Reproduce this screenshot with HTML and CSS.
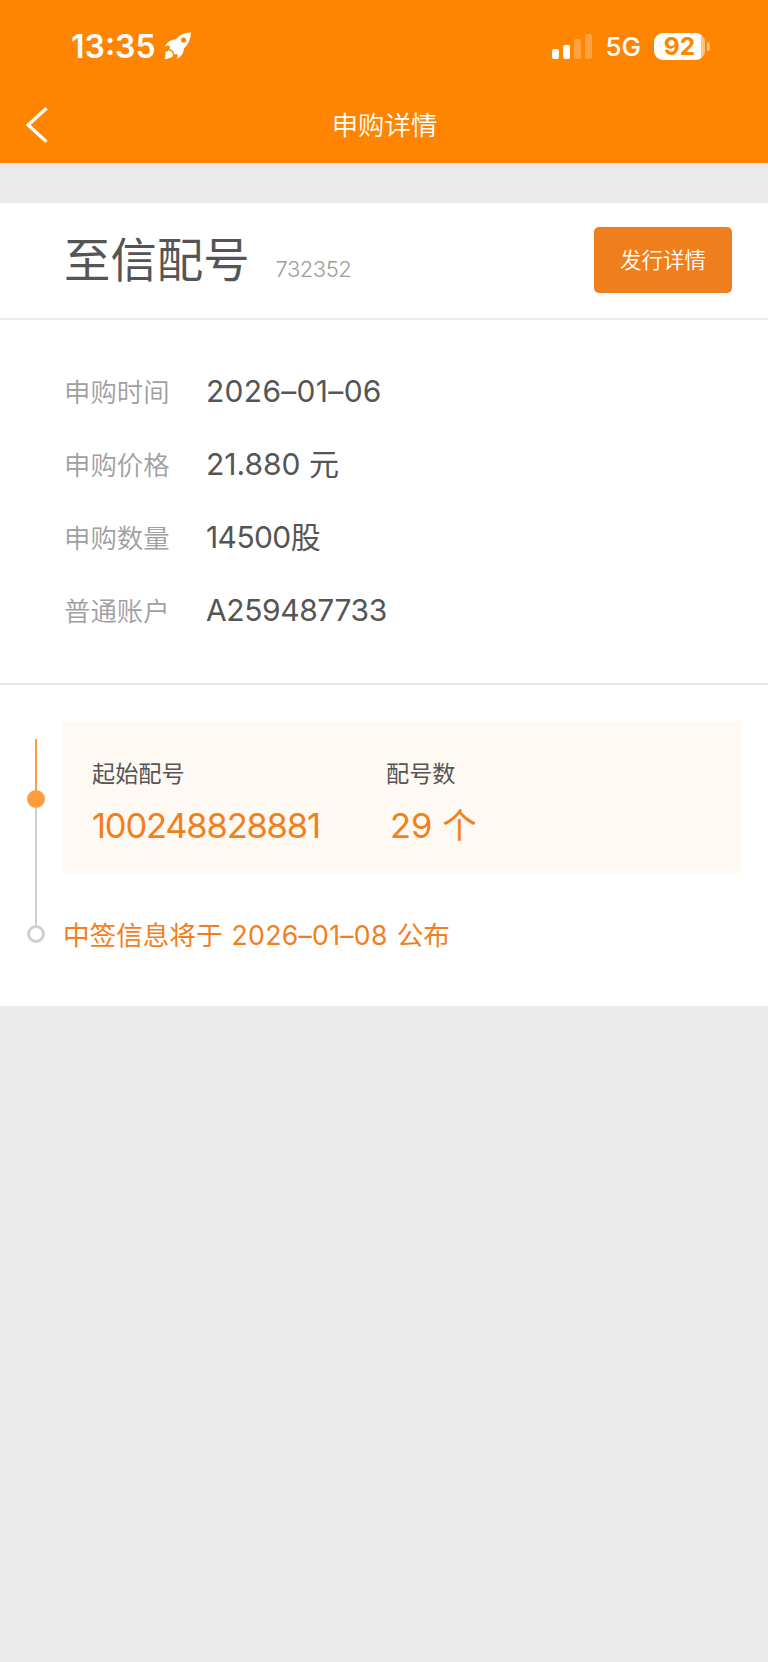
FILE: index.html
```
<!DOCTYPE html>
<html lang="zh-CN">
<head>
    <meta charset="UTF-8">
    <meta name="viewport" content="width=device-width, initial-scale=1.0">
    <title>申购详情</title>
    <link rel="stylesheet" href="styles.css">
</head>
<body>
    <header class="header">
        <div class="status-bar">
            <div class="status-left">
                <span class="time">13:35</span>
                <svg class="rocket" width="28" height="28" viewBox="0 0 28 28">
                    <path fill="#fff" fill-rule="evenodd" d="M27 .6C21 .8 15.500 3 11.500 7.600C7.500 7.200 4 9.500 .8 14.200C3 13.300 4.800 13.300 6 14.300C6 15.300 5.600 16.300 5.200 17.200C7.800 17 10.300 19.500 10 22.500C11.200 22.200 12.200 22 13 22C14 23.300 13.700 25 12.600 27.200C17.500 24.500 20 20.800 19.800 16.600C24.400 12.400 26.800 7 27 .6ZM19.600 5.400A2.600 2.600 0 1 1 19.600 10.600A2.600 2.600 0 1 1 19.600 5.400Z"/>
                    <path fill="#fff" d="M4.300 18.500C6.300 18 9.300 20.500 8.800 23.300C8.600 25.300 7 26 5.500 25.800C4.200 27 2.500 27.200 .3 27C1.300 26.200 1.500 25.400 1.500 24.700C1 23.500 1.400 22.500 2 21.800C1.800 21 1.200 20.300 .8 19.900C2 20.100 3.500 19.500 4.300 18.500Z"/>
                </svg>
            </div>
            <div class="status-right">
                <div class="signal">
                    <i class="bar bar-1"></i>
                    <i class="bar bar-2"></i>
                    <i class="bar bar-3"></i>
                    <i class="bar bar-4"></i>
                </div>
                <span class="network">5G</span>
                <div class="battery">
                    <div class="battery-body">92</div>
                    <div class="battery-tip"></div>
                </div>
            </div>
        </div>
        <nav class="nav-bar">
            <svg class="back" width="22" height="36" viewBox="0 0 22 36">
                <path d="M20.500 1.200L2.200 18L20.500 34.800" fill="none" stroke="#fff" stroke-width="3.200"/>
            </svg>
            <h1 class="nav-title">申购详情</h1>
        </nav>
    </header>

    <main class="card">
        <section class="stock">
            <h2 class="stock-name">至信配号</h2>
            <span class="stock-code">732352</span>
            <button class="btn">发行详情</button>
        </section>

        <section class="info">
            <div class="row">
                <span class="label">申购时间</span>
                <span class="value value-date">2026–01–06</span>
            </div>
            <div class="row">
                <span class="label">申购价格</span>
                <span class="value">21.880 元</span>
            </div>
            <div class="row">
                <span class="label">申购数量</span>
                <span class="value value-amount">14500股</span>
            </div>
            <div class="row">
                <span class="label">普通账户</span>
                <span class="value value-account">A259487733</span>
            </div>
        </section>

        <section class="progress">
            <div class="rail">
                <div class="line line-done"></div>
                <div class="dot"></div>
                <div class="line line-next"></div>
                <div class="ring"></div>
            </div>
            <div class="steps">
                <div class="allot">
                    <div class="allot-item allot-start">
                        <div class="allot-label">起始配号</div>
                        <div class="allot-value">100248828881</div>
                    </div>
                    <div class="allot-item allot-count">
                        <div class="allot-label">配号数</div>
                        <div class="allot-value">29 个</div>
                    </div>
                </div>
                <p class="notice">中签信息将于 <span class="notice-date">2026–01–08</span> 公布</p>
            </div>
        </section>
    </main>
</body>
</html>
```
FILE: styles.css
```
* {
    box-sizing: border-box;
}
body {
    font-family: Inter, "Noto Sans CJK SC", sans-serif;
    margin: 0;
    min-height: 1662px;
    background: #eaeaea;
    color: #555;
}
h1, h2, p {
    margin: 0;
    font-weight: 400;
}
.header {
    height: 163px;
    background: #ff8500;
    color: #fff;
}
.status-bar {
    height: 87px;
    padding: 5px 58px 0 71px;
    display: flex;
    align-items: center;
    justify-content: space-between;
}
.status-left {
    display: flex;
    align-items: center;
    gap: 8px;
}
.time {
    padding-top: 2px;
    font-size: 32px;
    line-height: 40px;
    font-weight: 600;
}
.status-right {
    display: flex;
    align-items: center;
}
.signal {
    display: flex;
    align-items: flex-end;
    gap: 4px;
    height: 25px;
    margin-right: 13px;
}
.bar {
    width: 7px;
    border-radius: 2px;
    background: #fff;
}
.bar-1 {
    height: 10px;
}
.bar-2 {
    height: 14px;
}
.bar-3 {
    height: 20px;
    opacity: 0.25;
}
.bar-4 {
    height: 25px;
    opacity: 0.25;
}
.network {
    padding-top: 2px;
    font-size: 26px;
    line-height: 32px;
    font-weight: 500;
    margin-right: 13px;
}
.battery {
    display: flex;
    align-items: center;
    gap: 2px;
}
.battery-body {
    width: 51px;
    height: 27px;
    border-radius: 9px;
    background: linear-gradient(90deg, #fff 47px, #ffc280 47px);
    color: #ff8500;
    font-size: 24.5px;
    line-height: 26px;
    font-weight: 700;
    text-align: center;
}
.battery-tip {
    width: 3px;
    height: 9px;
    border-radius: 0 4px 4px 0;
    background: #ffc280;
}
.nav-bar {
    height: 75px;
    padding: 0 26px;
    display: flex;
    align-items: center;
}
.nav-title {
    flex: 1;
    margin-right: 21px;
    font-size: 26.4px;
    line-height: 36px;
    font-weight: 350;
    text-align: center;
}
.card {
    margin-top: 40px;
    height: 803px;
    background: #fff;
}
.stock {
    height: 117px;
    padding: 0 36px 2px 64px;
    display: flex;
    align-items: center;
    border-bottom: 2px solid #e9e9e9;
}
.stock-name {
    font-size: 46.4px;
    line-height: 60px;
}
.stock-code {
    margin: 18px 0 0 26px;
    font-size: 22px;
    line-height: 30px;
    font-weight: 350;
    letter-spacing: -0.5px;
    color: #9c9c9c;
}
.btn {
    width: 138px;
    height: 66px;
    margin-left: auto;
    padding: 0 0 3px;
    border: none;
    border-radius: 5px;
    background: #ef7f1c;
    color: #fff;
    font-family: inherit;
    font-size: 21.5px;
    font-weight: 350;
}
.info {
    height: 365px;
    padding: 35px 0 0 64px;
    border-bottom: 2px solid #e9e9e9;
}
.row {
    height: 73px;
    display: flex;
    align-items: center;
}
.label {
    width: 142px;
    padding-top: 1px;
    font-size: 26.4px;
    line-height: 36px;
    font-weight: 350;
    color: #a0a0a0;
}
.value {
    padding-bottom: 2px;
    font-size: 30px;
    line-height: 40px;
}
.value-date {
    letter-spacing: 0.3px;
}
.value-amount {
    letter-spacing: -0.6px;
}
.value-account {
    letter-spacing: -0.4px;
}
.progress {
    display: flex;
    padding-top: 36px;
}
.rail {
    width: 18px;
    margin: 18px 18px 0 27px;
    display: flex;
    flex-direction: column;
    align-items: center;
}
.line {
    width: 2px;
}
.line-done {
    height: 51px;
    background: #ff9d3c;
}
.line-next {
    height: 117px;
    background: #cfcfcf;
}
.dot {
    width: 18px;
    height: 18px;
    border-radius: 50%;
    background: #ff9d3c;
}
.ring {
    width: 18px;
    height: 18px;
    border: 3px solid #cfcfcf;
    border-radius: 50%;
}
.steps {
    width: 678px;
}
.allot {
    height: 152px;
    padding: 35px 29px 0;
    display: flex;
    background: #fef9f3;
}
.allot-start {
    width: 294px;
}
.allot-label {
    font-size: 23.2px;
    line-height: 36px;
}
.allot-value {
    margin-top: 12px;
    font-size: 34.5px;
    line-height: 44px;
    color: #f27f1b;
}
.allot-start .allot-value {
    letter-spacing: -1.2px;
}
.allot-count .allot-value {
    padding-left: 4px;
}
.notice {
    margin-top: 44px;
    font-size: 26.6px;
    line-height: 36px;
    word-spacing: 1.5px;
    color: #f27f1b;
}
.notice-date {
    letter-spacing: 0.3px;
}
```
